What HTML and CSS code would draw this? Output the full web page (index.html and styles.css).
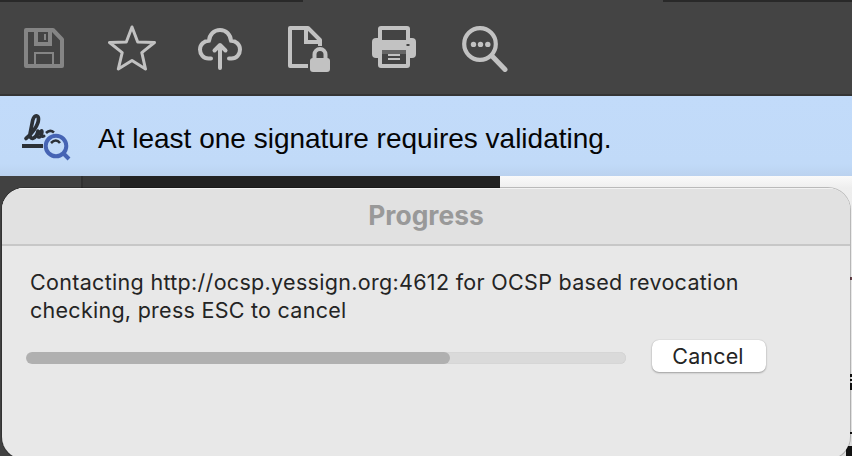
FILE: index.html
```html
<!DOCTYPE html>
<html lang="en">
<head>
<meta charset="utf-8">
<title>Progress</title>
<link rel="stylesheet" href="styles.css">
</head>
<body>
<div class="app">
  <div class="tabstrip"><span></span><span></span></div>
  <header class="toolbar">
    <svg class="icon muted" viewBox="20 24 48 48"><path d="M26 30H53L62 39.5V66H26Z" stroke-width="4" stroke-linejoin="round"/><path d="M36 30V44H50V30" stroke-width="4"/><path d="M45 34V40" stroke-width="2"/><path d="M35 66V53H53V66" stroke-width="2"/></svg>
    <svg class="icon" viewBox="108 24 48 48"><path d="M132 27L137.700 42L154.500 42.500L141.800 52.700L145.500 69L132 60.500L118.300 69L122.200 52.700L109.500 42.500L126.300 42Z" stroke-width="3" stroke-linejoin="round"/></svg>
    <svg class="icon" viewBox="196 24 48 48"><path d="M211 58.5H208.500C203.500 58.500 200 54.500 200 49.500C200 44.500 204 40.800 209 40.800C209.500 34.500 214 30 220 30C226 30 230.500 34.500 231 40.800C236 40.800 240 44.500 240 49.500C240 54.500 236.500 58.500 231.500 58.500H229M220 68V46M214.500 50.500L220 45L225.500 50.500" stroke-width="4" stroke-linecap="round" stroke-linejoin="round"/></svg>
    <svg class="icon" viewBox="284 24 48 48"><path d="M308 66H290V28H308L320 40V46" stroke-width="4" stroke-linejoin="round"/><path d="M306 28V42H320" stroke-width="4"/><path d="M314.500 59V54.500A5.500 5.500 0 0 1 325.500 54.500V59" stroke-width="4"/><rect x="310" y="58" width="20" height="14" rx="3" fill="currentColor" stroke="none"/></svg>
    <svg class="icon" viewBox="370 24 48 48"><path d="M376 38H412Q416 38 416 42V54Q416 58 412 58H376Q372 58 372 54V42Q372 38 376 38Z" fill="currentColor" stroke="none"/><rect x="380" y="28" width="28" height="38" rx="1" stroke-width="4" fill="#444" stroke-linejoin="round"/><path d="M379 40H409V50H379Z" fill="currentColor" stroke="none"/><path d="M382 50H406V54H382Z" fill="#666" stroke="none"/><path d="M388 55H400M388 59H400" stroke-width="2"/><path d="M406.500 45H409.500" stroke="#444" stroke-width="2"/></svg>
    <svg class="icon" viewBox="460 24 48 48"><circle cx="480" cy="44" r="15.800" stroke-width="4.200"/><path d="M492 56L505 69.500" stroke-width="5" stroke-linecap="round"/><g fill="currentColor" stroke="none"><circle cx="473.500" cy="44.400" r="2.700"/><circle cx="480.500" cy="44.400" r="2.700"/><circle cx="487.800" cy="44.400" r="2.700"/></g></svg>
  </header>
  <div class="banner">
    <svg class="sign" viewBox="20 110 52 52"><path d="M22 146H43" stroke="#2c3137" stroke-width="4"/><path d="M26 138.500C32 134 38.500 125 38.500 119C38.500 114.500 34.500 114.500 32.800 120L30 134C29.500 141 36 139 38 131.500" stroke="#2c3137" stroke-width="3.700" stroke-linecap="round"/><path d="M38 131C36.500 135 37.500 138.500 40 137C42.500 135 43 129 41 131C39 133 41 138 44 136" stroke="#2c3137" stroke-width="3" stroke-linecap="round"/><path d="M46 133Q50 129 54 132.500M51 143Q56 138 60 143" stroke="#2c3137" stroke-width="2.600"/><circle cx="56" cy="146" r="10.300" stroke="#4664b4" stroke-width="4"/><path d="M63 153L69 159" stroke="#4664b4" stroke-width="4"/></svg>
    <span class="banner-text">At least one signature requires validating.</span>
  </div>
  <main class="workspace"><div class="rail"></div><div class="panel"></div><div class="canvas"></div><div class="page"><svg class="edge" viewBox="850 176 2 280"><path fill="#69444c" d="M850 277h2v3h-2z"/><path fill="#111" d="M850 374h2v3h-2zM850 379h2v2h-2zM850 383h2v7h-2zM850 432h2v2h-2zM846 446h6v10h-6z"/></svg></div></main>
</div>
<section class="dialog">
  <h1 class="title">Progress</h1>
  <p class="message"><span class="line-one">Contacting http://ocsp.yessign.org:4612 for OCSP based revocation</span><br><span class="line-two">checking, press ESC to cancel</span></p>
  <div class="controls"><div class="track"><div class="fill"></div></div><button class="cancel">Cancel</button></div>
</section>
</body>
</html>
```
FILE: styles.css
```css
* { box-sizing: border-box; }
body { margin: 0; width: 852px; height: 456px; overflow: hidden; position: relative; background: #444; font-family: Inter, sans-serif; }
.app { display: flex; flex-direction: column; height: 456px; }
.tabstrip { display: flex; justify-content: space-between; height: 2px; background: #444; }
.tabstrip span { width: 303px; background: #292929; }
.tabstrip span + span { width: 189px; }
.toolbar { display: grid; grid-template-columns: 88px 88px 88px 86px 90px 48px; height: 94px; padding: 22px 20px 0; background: #444; border-bottom: 2px solid #353535; }
.icon { width: 48px; height: 48px; color: #c2c2c2; fill: none; stroke: currentColor; }
.muted { color: #858585; }
.banner { display: flex; height: 80px; padding: 14px 20px 0; background: linear-gradient(#c2dbfa, #c1daf8 85%, #bbd2ef); }
.sign { width: 52px; height: 52px; fill: none; margin-right: 26px; }
.banner-text { font: 28px/32px "Liberation Sans", sans-serif; color: #050505; padding-top: 13px; white-space: nowrap; }
.workspace { display: flex; flex: 1; }
.rail { width: 83px; background: #414141; border-right: 2px solid #303030; }
.panel { width: 37px; background: #393939; }
.canvas { width: 380px; background: #222; }
.page { display: flex; flex: 1; justify-content: flex-end; background: linear-gradient(#fafafa, #eee 12px, #dedede); }
.edge { width: 2px; height: 280px; overflow: visible; }
.dialog { position: absolute; left: 2px; top: 188px; width: 848px; height: 271px; border-radius: 22px; overflow: hidden; background: #e8e8e8; box-shadow: 0 0 0 1px rgba(0, 0, 0, .22), inset 0 1px #f3f3f3; }
.title { height: 58px; margin: 0; background: #e1e1e1; border-bottom: 2px solid #c7c7c7; border-top: 1px solid #f2f2f2; font-size: 26.4px; line-height: 52px; font-weight: 700; text-align: center; color: #999; }
.message { margin: 22px 0 0 28px; font-size: 21.5px; line-height: 28px; color: #242424; white-space: nowrap; }
.line-one { letter-spacing: .31px; }
.line-two { letter-spacing: .27px; }
.controls { display: flex; align-items: center; margin: 16px 0 0 24px; gap: 26px; }
.track { width: 600px; height: 12px; margin-top: 4px; border-radius: 6px; background: #dadada; box-shadow: inset 0 0 1px #bbb; overflow: hidden; }
.fill { width: 424px; height: 12px; border-radius: 6px; background: #b0b0b0; }
.cancel { width: 114px; height: 32px; border: 0; border-radius: 7px; padding: 0 2px 0 0; background: #fff; box-shadow: 0 1px 2px rgba(0, 0, 0, .3), 0 0 1px rgba(0, 0, 0, .25); font: 21.5px/32px Inter, sans-serif; letter-spacing: .15px; color: #242424; }
```
